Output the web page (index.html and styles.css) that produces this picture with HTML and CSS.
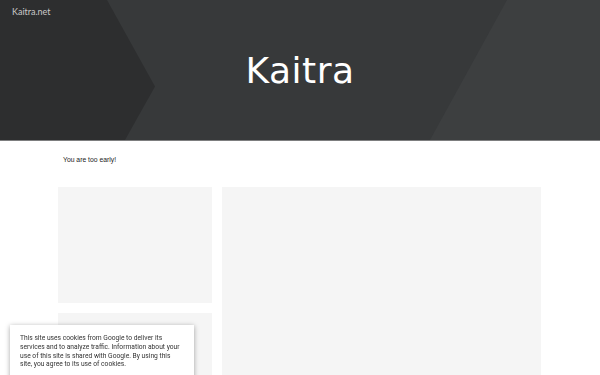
FILE: index.html
```html
<!DOCTYPE html>
<html lang="en">
<head>
  <meta charset="UTF-8" />
  <title>Kaitra</title>
  <link rel="stylesheet" href="styles.css">
</head>
<body>
  <header class="hero">
    <svg class="hero-bg" viewBox="0 0 600 141" preserveAspectRatio="none">
      <polygon points="0,0 107,0 155,87 125,141 0,141" fill="#2d2e2f" />
      <polygon points="507,0 600,0 600,141 430,141" fill="#3d3f40" />
    </svg>
    <div class="site-name">Kaitra.net</div>
    <h1 class="hero-title">Kaitra</h1>
  </header>

  <main class="content">
    <p class="notice">You are too early!</p>
    <div class="grid">
      <div class="col-left">
        <div class="card card-top"></div>
        <div class="card card-bottom"></div>
      </div>
      <div class="card card-main"></div>
    </div>
  </main>

  <div class="cookie-bar">
    This site uses cookies from Google to deliver its services and to analyze traffic. Information about your use of this site is shared with Google. By using this site, you agree to its use of cookies.
  </div>
</body>
</html>
```

FILE: styles.css
```css
html, body {
  margin: 0;
  padding: 0;
  height: 375px;
  overflow: hidden;
  background: #fff;
  font-family: 'Open Sans', 'DejaVu Sans', sans-serif;
}

.hero {
  position: relative;
  height: 140px;
  background: #37393a;
  border-bottom: 1px solid #7d7e7f;
  overflow: hidden;
  display: flex;
  align-items: center;
  justify-content: center;
}

.hero-bg {
  position: absolute;
  inset: 0;
  width: 100%;
  height: 100%;
}

.site-name {
  position: absolute;
  left: 12px;
  top: 6px;
  font-size: 9px;
  color: #c9c9c9;
  font-family: 'Lato', 'Open Sans', sans-serif;
}

.hero-title {
  position: relative;
  margin: 0;
  font-family: 'DejaVu Sans', sans-serif;
  font-weight: normal;
  font-size: 36px;
  letter-spacing: 0.5px;
  color: #fff;
}

.content {
  padding: 0 58px;
}

.notice {
  margin: 15px 0 0 5px;
  font-size: 6.8px;
  color: #222;
  font-family: 'Liberation Sans', sans-serif;
}

.grid {
  display: flex;
  gap: 10px;
  margin-top: 24px;
}

.col-left {
  display: flex;
  flex-direction: column;
  gap: 10px;
  width: 154px;
}

.card {
  background: #f5f5f5;
}

.card-top {
  height: 116px;
}

.card-bottom {
  height: 80px;
}

.card-main {
  width: 319px;
  height: 200px;
}

.cookie-bar {
  position: fixed;
  left: 10px;
  bottom: -10px;
  width: 160px;
  padding: 9px 14px 16px 10px;
  background: #fff;
  box-shadow: 0 1px 5px rgba(0,0,0,0.35);
  font-family: 'Roboto', sans-serif;
  font-size: 6.7px;
  line-height: 8.7px;
  color: #333;
}
```
